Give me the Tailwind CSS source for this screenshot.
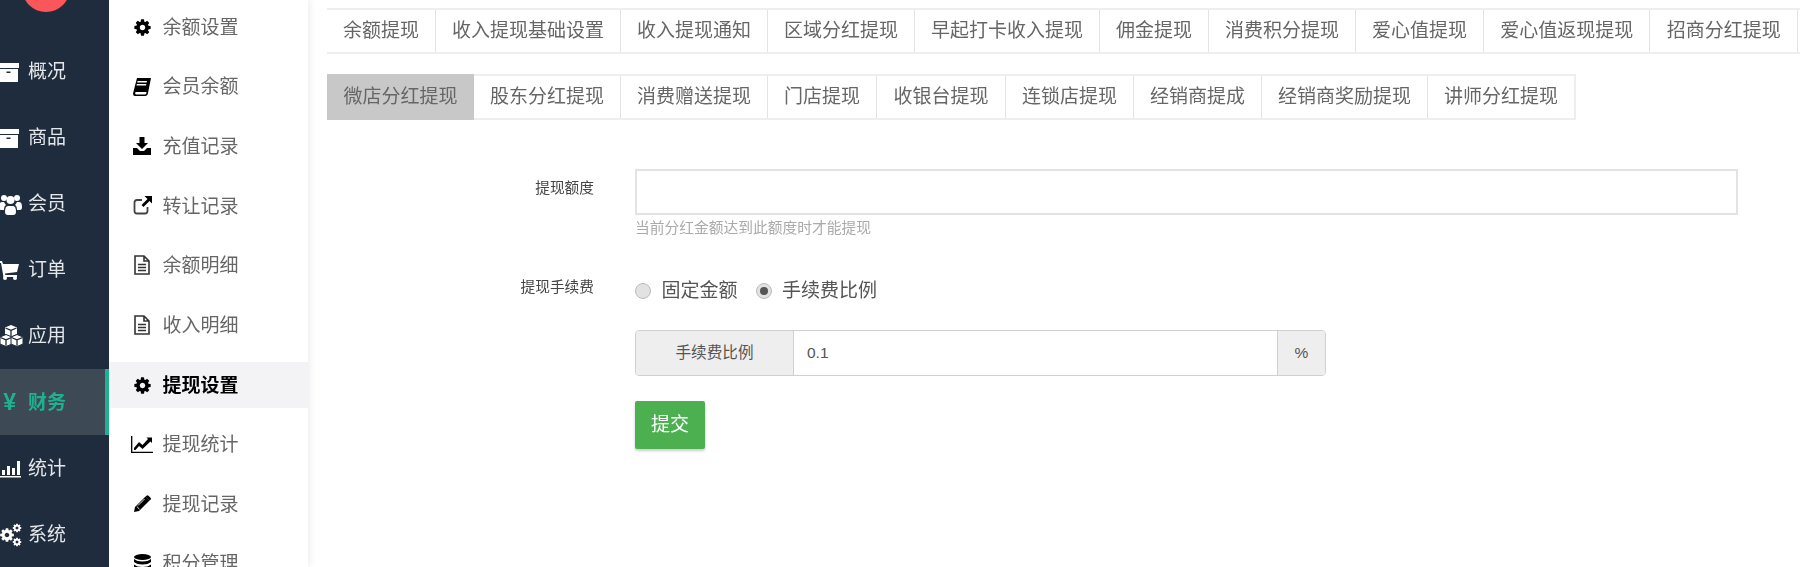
<!DOCTYPE html>
<html lang="zh-CN">
<head>
    <meta charset="UTF-8">
    <title>提现设置</title>
    <script src="https://cdn.jsdelivr.net/npm/@tailwindcss/browser@4"></script>
</head>
<body class="bg-white font-['Liberation_Sans','Noto_Sans_CJK_SC',sans-serif] overflow-hidden">
    <svg class="hidden">
        <symbol id="cog" viewBox="0 0 1792 1792"><path fill="currentColor" d="M1152 896q0-106-75-181t-181-75-181 75-75 181 75 181 181 75 181-75 75-181zm512-109v222q0 12-8 23t-20 13l-185 28q-19 54-39 91 35 50 107 138 10 12 10 25t-9 23q-27 37-99 108t-94 71q-12 0-26-9l-138-108q-44 23-91 38-16 136-29 186-7 28-36 28h-222q-14 0-24.500-8.500t-11.500-21.500l-28-184q-49-16-90-37l-141 107q-10 9-25 9-14 0-25-11-126-114-165-168-7-10-7-23 0-12 8-23 15-21 51-66.500t54-70.500q-27-50-41-99l-183-27q-13-2-21-12.500t-8-23.500v-222q0-12 8-23t19-13l186-28q14-46 39-92-40-57-107-138-10-12-10-24 0-10 9-23 26-36 98.500-107.500t94.500-71.500q13 0 26 10l138 107q44-23 91-38 16-136 29-186 7-28 36-28h222q14 0 24.500 8.500t11.500 21.500l28 184q49 16 90 37l142-107q9-9 24-9 13 0 25 10 129 119 165 170 7 8 7 22 0 12-8 23-15 21-51 66.500t-54 70.500q26 50 41 98l183 28q13 2 21 12.500t8 23.500z"/></symbol>
        <symbol id="archive" viewBox="0 0 21 19"><path fill="currentColor" d="M0 0h21v5H0zM1 6h19v12.500a.5.500 0 0 1-.5.500h-18a.5.500 0 0 1-.5-.500zM8.500 8.500v1.500h4V8.500z" fill-rule="evenodd"/></symbol>
        <symbol id="file" viewBox="0 0 18 20"><path fill="none" stroke="currentColor" stroke-width="1.600" d="M2 1h9l5 5v13H2zM11 1v5h5M5 9.500h8M5 12.500h8M5 15.500h8"/></symbol>
    </svg>

    <div class="flex h-[567px] blur-[0.35px]">
        <!-- main nav -->
        <aside class="relative w-[109px] shrink-0 overflow-hidden bg-[#1f2c3d] text-[19px] text-[#e4e7ea]">
            <div class="absolute left-[22px] top-[-36px] h-[48px] w-[48px] rounded-full bg-[#f9575a]"></div>
            <ul class="pt-[39px]">
                <li class="flex h-[66px] items-center">
                    <span class="flex w-[28px] justify-end pr-[9px] text-white"><svg class="h-[19px] w-[21px] shrink-0"><use href="#archive"/></svg></span>
                    <span>概况</span>
                </li>
                <li class="flex h-[66px] items-center">
                    <span class="flex w-[28px] justify-end pr-[9px] text-white"><svg class="h-[19px] w-[21px] shrink-0"><use href="#archive"/></svg></span>
                    <span>商品</span>
                </li>
                <li class="flex h-[66px] items-center">
                    <span class="flex w-[28px] justify-end pr-[6px] text-white">
                        <svg class="h-[22px] w-[23px] shrink-0" viewBox="0 0 23 22" fill="currentColor"><circle cx="5" cy="5" r="3"/><circle cx="18" cy="5" r="3"/><circle cx="11.500" cy="7" r="4"/><path d="M0 14q0-5 3-5h2q1 2 2 3-2 1-2 5H2q-2 0-2-3zM23 14q0-5-3-5h-2q-1 2-2 3 2 1 2 5h3q2 0 2-3zM6 19q0-6 3-6h5q3 0 3 6 0 3-3 3H9q-3 0-3-3z"/></svg>
                    </span>
                    <span>会员</span>
                </li>
                <li class="flex h-[66px] items-center">
                    <span class="flex w-[28px] justify-end pr-[9px] text-white">
                        <svg class="h-[19px] w-[21px] shrink-0" viewBox="0 0 21 19" fill="currentColor"><path d="M0 0h4l1 3h16l-2 8-12 1.500.4 1.500H19v2H5.500L3 2H0z"/><circle cx="7" cy="17" r="2"/><circle cx="17" cy="17" r="2"/></svg>
                    </span>
                    <span>订单</span>
                </li>
                <li class="flex h-[66px] items-center">
                    <span class="flex w-[28px] justify-end pr-[5px] text-white">
                        <svg class="h-[22px] w-[23px] shrink-0" viewBox="0 0 23 22" fill="none" stroke-linejoin="round">
                            <path fill="currentColor" d="M11 0l6 2.500v6.500l-6 2.500-6-2.500V2.500z"/>
                            <path stroke="#1f2c3d" stroke-width="1.300" d="M5.500 3l5.500 2.300L16.500 3M11 5.300v6"/>
                            <path fill="currentColor" stroke="#1f2c3d" d="M6 9.500l6 2.500v7l-6 2.500-6-2.500v-7z"/>
                            <path stroke="#1f2c3d" stroke-width="1.300" d="M.5 12.500L6 14.800l5.500-2.300M6 14.800v6"/>
                            <path fill="currentColor" stroke="#1f2c3d" d="M17 9.500l6 2.500v7l-6 2.500-6-2.500v-7z"/>
                            <path stroke="#1f2c3d" stroke-width="1.300" d="M11.500 12.500l5.500 2.300 5.500-2.300M17 14.800v6"/>
                        </svg>
                    </span>
                    <span>应用</span>
                </li>
                <li class="flex h-[66px] items-center border-r-4 border-[#1fb18f] bg-[#3d4955] font-bold text-[#1fb18f]">
                    <span class="flex w-[28px] justify-end pr-[12px] text-[23px] leading-none">¥</span>
                    <span class="translate-y-[1px]">财务</span>
                </li>
                <li class="flex h-[66px] items-center">
                    <span class="flex w-[28px] justify-end pr-[7px] text-white">
                        <svg class="h-[18px] w-[21px] shrink-0 translate-y-[1px]" viewBox="0 0 21 18" fill="currentColor"><path d="M0 16h21v1.500H0zM2 10h3v5H2zM7 6h3v9H7zM12 8h3v7h-3zM17 1h3v14h-3z"/></svg>
                    </span>
                    <span class="translate-y-[1px]">统计</span>
                </li>
                <li class="flex h-[66px] items-center">
                    <span class="flex w-[28px] justify-end pr-[7px] text-white">
                        <svg class="h-[22px] w-[21px] shrink-0 translate-y-[1px] overflow-visible" viewBox="0 0 21 22"><use href="#cog" x="-1" y="3" width="16" height="16"/><use href="#cog" x="12" y="-1" width="10" height="10"/><use href="#cog" x="12" y="13" width="10" height="10"/></svg>
                    </span>
                    <span class="translate-y-[1px]">系统</span>
                </li>
            </ul>
        </aside>

        <!-- sub nav -->
        <aside class="w-[199px] shrink-0 overflow-hidden pt-[4px] text-[19px] text-[#666] shadow-[3px_0_6px_rgba(0,0,0,0.06)]">
            <ul class="flex flex-col gap-[13.600px]">
                <li class="flex h-[46px] items-center pl-[22px]">
                    <span class="flex w-[22px] justify-center text-black"><svg class="h-[19px] w-[19px] shrink-0"><use href="#cog"/></svg></span><span class="ml-[9.500px] translate-y-[1px]">余额设置</span>
                </li>
                <li class="flex h-[46px] items-center pl-[22px]">
                    <span class="flex w-[22px] justify-center text-black">
                        <svg class="h-[18px] w-[18px] shrink-0" viewBox="0 0 18 18" fill="currentColor"><path d="M4 0h14l-3 15q-.3 3-3 3H2q-2 0-2-2.500zM4.500 3l-.3 1.500h9.500L14 3zM3.800 6l-.3 1.500H13L13.300 6zM2.500 14q-1 2 .5 2.500h9q1 0 1.300-1l.2-1.500z" fill-rule="evenodd"/></svg>
                    </span><span class="ml-[9.500px] translate-y-[1px]">会员余额</span>
                </li>
                <li class="flex h-[46px] items-center pl-[22px]">
                    <span class="flex w-[22px] justify-center text-black">
                        <svg class="h-[18px] w-[18px] shrink-0" viewBox="0 0 18 18" fill="currentColor"><path d="M6.500 0h5v6H15l-6 6-6-6h3.500zM0 11h4l3 3h4l3-3h4v7H0z"/></svg>
                    </span><span class="ml-[9.500px] translate-y-[1px]">充值记录</span>
                </li>
                <li class="flex h-[46px] items-center pl-[22px]">
                    <span class="flex w-[22px] justify-center text-black">
                        <svg class="h-[19px] w-[19px] shrink-0" viewBox="0 0 19 19"><path fill="none" stroke="#444" stroke-width="1.800" d="M9 4H4Q1.500 4 1.500 6.500v8.500Q1.500 17.500 4 17.500h8q2.500 0 2.500-2.500v-4"/><path fill="currentColor" d="M11.500 0H19v7.500l-2.500-2.500-6 6-2-2 6-6z"/></svg>
                    </span><span class="ml-[9.500px] translate-y-[1px]">转让记录</span>
                </li>
                <li class="flex h-[46px] items-center pl-[22px]">
                    <span class="flex w-[22px] justify-center text-[#333]"><svg class="h-[20px] w-[18px] shrink-0"><use href="#file"/></svg></span><span class="ml-[9.500px] translate-y-[1px]">余额明细</span>
                </li>
                <li class="flex h-[46px] items-center pl-[22px]">
                    <span class="flex w-[22px] justify-center text-[#333]"><svg class="h-[20px] w-[18px] shrink-0"><use href="#file"/></svg></span><span class="ml-[9.500px] translate-y-[1px]">收入明细</span>
                </li>
                <li class="flex h-[46px] items-center bg-[#f3f3f5] pl-[22px] font-bold text-black">
                    <span class="flex w-[22px] justify-center"><svg class="h-[19px] w-[19px] shrink-0 translate-y-[1px]"><use href="#cog"/></svg></span><span class="ml-[9.500px] translate-y-[2px]">提现设置</span>
                </li>
                <li class="flex h-[46px] items-center pl-[22px]">
                    <span class="flex w-[22px] justify-center text-black">
                        <svg class="h-[17px] w-[22px] shrink-0" viewBox="0 0 22 17"><path fill="none" stroke="currentColor" stroke-width="1.300" d="M.7 0v16.300H22"/><path fill="currentColor" d="M3 12l5-6 3.500 3L17 3l-1.500-1.500H21V7l-1.600-1.600-7.800 7.600L8 10l-3.500 4H3z"/></svg>
                    </span><span class="ml-[9.500px] translate-y-[1px]">提现统计</span>
                </li>
                <li class="flex h-[46px] items-center pl-[22px]">
                    <span class="flex w-[22px] justify-center text-black">
                        <svg class="h-[17px] w-[17px] shrink-0" viewBox="0 0 17 17" fill="currentColor"><path d="M0 17l1-5L11.500 1.500l4 4L5 16zM12.500.7q1-1 2 0l2 2q1 1 0 2l-.8.800-4-4z"/><path stroke="#fff" stroke-width=".9" d="M2.800 11.500l2.700 2.700M4 10.500l6.500-6.500"/></svg>
                    </span><span class="ml-[9.500px] translate-y-[1px]">提现记录</span>
                </li>
                <li class="flex h-[46px] items-center pl-[22px]">
                    <span class="flex w-[22px] justify-center text-black">
                        <svg class="h-[19px] w-[17px] shrink-0" viewBox="0 0 17 19" fill="currentColor"><ellipse cx="8.500" cy="3" rx="8.500" ry="3"/><path d="M0 5q3 2.500 8.500 2.500T17 5v3q-3 2.500-8.500 2.500T0 8zM0 10.500q3 2.500 8.500 2.500t8.500-2.500v3q-3 2.500-8.500 2.500T0 13.500z"/></svg>
                    </span><span class="ml-[9.500px] translate-y-[1px]">积分管理</span>
                </li>
            </ul>
        </aside>

        <!-- content -->
        <main class="flex-1 pl-[19px] pt-[8px] text-[#666]">
            <div class="flex h-[46px] w-[1473px] border-y-2 border-[#eee] text-[19px]">
                <a class="flex items-center border-r border-[#e4e4e4] px-[16px]">余额提现</a>
                <a class="flex items-center border-r border-[#e4e4e4] px-[16px]">收入提现基础设置</a>
                <a class="flex items-center border-r border-[#e4e4e4] px-[16px]">收入提现通知</a>
                <a class="flex items-center border-r border-[#e4e4e4] px-[16px]">区域分红提现</a>
                <a class="flex items-center border-r border-[#e4e4e4] px-[16px]">早起打卡收入提现</a>
                <a class="flex items-center border-r border-[#e4e4e4] px-[16px]">佣金提现</a>
                <a class="flex items-center border-r border-[#e4e4e4] px-[16px]">消费积分提现</a>
                <a class="flex items-center border-r border-[#e4e4e4] px-[16px]">爱心值提现</a>
                <a class="flex items-center border-r border-[#e4e4e4] px-[16px]">爱心值返现提现</a>
                <a class="flex items-center border-r border-[#e4e4e4] px-[16.500px]">招商分红提现</a>
            </div>
            <div class="mt-[20px] flex h-[46px] w-[1249px] border-y-2 border-r-2 border-[#eee] text-[19px]">
                <a class="-my-[2px] flex items-center bg-[#c8c8c8] px-[16.500px]">微店分红提现</a>
                <a class="flex items-center border-r border-[#e4e4e4] px-[16px]">股东分红提现</a>
                <a class="flex items-center border-r border-[#e4e4e4] px-[16px]">消费赠送提现</a>
                <a class="flex items-center border-r border-[#e4e4e4] px-[16px]">门店提现</a>
                <a class="flex items-center border-r border-[#e4e4e4] px-[16.500px]">收银台提现</a>
                <a class="flex items-center border-r border-[#e4e4e4] px-[16px]">连锁店提现</a>
                <a class="flex items-center border-r border-[#e4e4e4] px-[16px]">经销商提成</a>
                <a class="flex items-center border-r border-[#e4e4e4] px-[16px]">经销商奖励提现</a>
                <a class="flex items-center px-[16px]">讲师分红提现</a>
            </div>

            <form class="mt-[49px]">
                <div class="flex">
                    <label class="w-[267px] pt-[8px] text-right text-[14.700px] leading-[22px] text-[#444]">提现额度</label>
                    <div class="ml-[41px] w-[1103px]">
                        <input type="text" class="block h-[46px] w-full border-2 border-[#e3e3e3] bg-white px-3 outline-none">
                        <p class="mt-[3px] text-[14.750px] leading-[20px] text-[#aaa]">当前分红金额达到此额度时才能提现</p>
                    </div>
                </div>

                <div class="mt-[39px] flex">
                    <label class="w-[267px] text-right text-[14.700px] leading-[20px] text-[#444]">提现手续费</label>
                    <div class="ml-[41px] flex h-[26px] translate-y-[1px] items-center text-[19px] text-[#555]">
                        <span class="h-[16px] w-[16px] rounded-full border border-[#bbb] bg-[#e2e2e2]"></span>
                        <span class="ml-[10.500px]">固定金额</span>
                        <span class="ml-[18px] flex h-[16px] w-[16px] items-center justify-center rounded-full border border-[#bbb] bg-[#e2e2e2]"><span class="h-[8px] w-[8px] rounded-full bg-[#555]"></span></span>
                        <span class="ml-[10.500px]">手续费比例</span>
                    </div>
                </div>

                <div class="ml-[308px] mt-[27px] flex h-[46px] w-[691px] overflow-hidden rounded-[4px] border border-[#d0d0d0] text-[#555]">
                    <span class="flex w-[158px] items-center justify-center border-r border-[#d0d0d0] bg-[#eee] text-[15.600px]">手续费比例</span>
                    <input type="text" value="0.1" class="min-w-0 flex-1 bg-white px-[13px] text-[15.500px] outline-none">
                    <span class="flex w-[48px] items-center justify-center border-l border-[#d0d0d0] bg-[#eee] text-[15.500px]">%</span>
                </div>

                <button type="button" class="ml-[308px] mt-[25px] h-[48px] w-[70px] rounded-[2px] bg-[#4caf50] text-[19px] text-white shadow-[0_2px_3px_rgba(0,0,0,0.2)]">提交</button>
            </form>
        </main>
    </div>
</body>
</html>
